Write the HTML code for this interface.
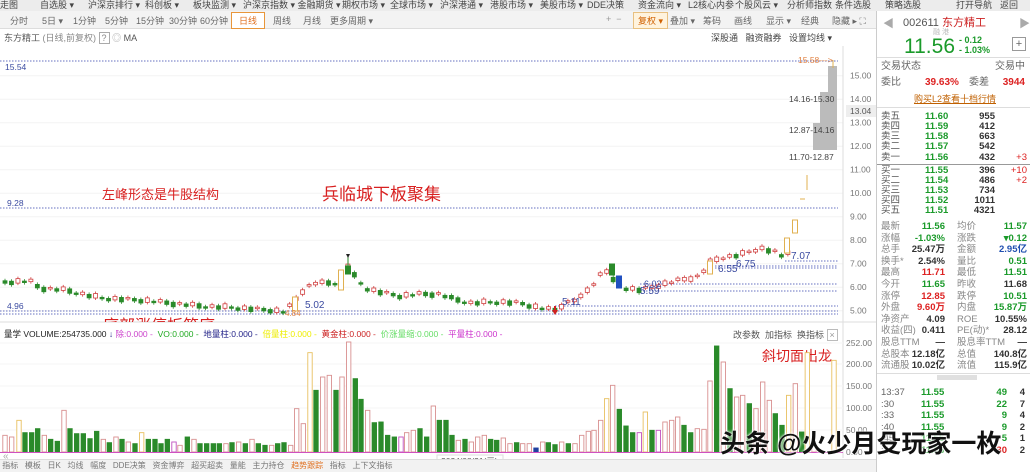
<!DOCTYPE html>
<html><head><meta charset="utf-8">
<style>
*{margin:0;padding:0;box-sizing:border-box}
body{width:1030px;height:472px;overflow:hidden;background:#fff;font-family:"Liberation Sans","Noto Sans CJK SC",sans-serif;position:relative;color:#333}
.a{position:absolute;white-space:nowrap}
#top{position:absolute;left:0;top:0;width:1030px;height:11px;background:#ececec;font-size:9px;color:#444;line-height:11px}
#tabs{position:absolute;left:0;top:11px;width:876px;height:18px;background:#f3f3f3;border-bottom:1px solid #ddd;font-size:9px;color:#666}
#tabs span{position:absolute;top:3px}
#rp{position:absolute;left:876px;top:11px;width:154px;height:461px;border-left:1px solid #ccc;background:#fff;font-size:10px}
.r{position:absolute;left:4px;width:148px;height:10px;line-height:10px;font-size:9.5px}
.r b{position:absolute;font-weight:bold}
.g{color:#1a9a2a}.rd{color:#d22}.gr{color:#888}.bl{color:#2050b0}
</style></head><body>
<div id="top">
<span class="a" style="left:0">走图</span><span class="a" style="left:40px">自选股 ▾</span><span class="a" style="left:88px">沪深京排行 ▾</span><span class="a" style="left:145px">科创板 ▾</span><span class="a" style="left:193px">板块监测 ▾</span><span class="a" style="left:243px">沪深京指数 ▾ 金融期货 ▾</span><span class="a" style="left:342px">期权市场 ▾</span><span class="a" style="left:390px">全球市场 ▾</span><span class="a" style="left:440px">沪深港通 ▾</span><span class="a" style="left:490px">港股市场 ▾</span><span class="a" style="left:540px">美股市场 ▾</span><span class="a" style="left:587px">DDE决策</span><span class="a" style="left:638px">资金流向 ▾</span><span class="a" style="left:688px">L2核心内参</span><span class="a" style="left:735px">个股风云 ▾</span><span class="a" style="left:787px">分析师指数</span><span class="a" style="left:835px">条件选股</span><span class="a" style="left:885px">策略选股</span><span class="a" style="left:956px">打开导航</span><span class="a" style="left:1000px">返回</span>
</div>
<div id="tabs">
<span style="left:10px">分时</span><span style="left:42px">5日 ▾</span><span style="left:73px">1分钟</span><span style="left:105px">5分钟</span><span style="left:136px">15分钟</span><span style="left:169px">30分钟</span><span style="left:200px">60分钟</span>
<span style="left:231px;top:1px;padding:1px 7px;border:1px solid #e8963a;background:#fff;color:#e07020">日线</span>
<span style="left:273px">周线</span><span style="left:303px">月线</span><span style="left:330px">更多周期 ▾</span>
<span style="left:606px;color:#999">+ &nbsp;−</span>
<span style="left:633px;top:1px;padding:1px 4px;border:1px solid #e8c080;background:#fff3dd;color:#d06000">复权 ▾</span>
<span style="left:670px">叠加 ▾</span><span style="left:703px">筹码</span><span style="left:734px">画线</span><span style="left:766px">显示 ▾</span><span style="left:801px">经典</span><span style="left:832px">隐藏 ▸ ⛶</span>
</div>
<div class="a" style="left:4px;top:31px;font-size:9px;color:#555">东方精工 <span style="color:#888">(日线,前复权)</span> <span style="border:1px solid #aaa;padding:0 2px;color:#888">?</span> <span style="color:#aaa">◎</span> MA</div>
<div class="a" style="left:711px;top:31px;font-size:9px;color:#444">深股通 &nbsp; 融资融券 &nbsp;&nbsp;设置均线 ▾</div>
<div class="a" style="left:4px;top:328px;font-size:8.5px;color:#222">量学 VOLUME:254735.000 <span style="color:#228">↓</span> <span style="color:#c4c">除:0.000 -</span> &nbsp;<span style="color:#2a2">VO:0.000 -</span> &nbsp;<span style="color:#228">地量柱:0.000 -</span> &nbsp;<span style="color:#ee0">倍量柱:0.000 -</span> &nbsp;<span style="color:#c22">黄金柱:0.000 -</span> &nbsp;<span style="color:#6d6">价涨量缩:0.000 -</span> &nbsp;<span style="color:#c3c">平量柱:0.000 -</span></div>
<div class="a" style="left:733px;top:328px;font-size:9px;color:#555">改参数 &nbsp;加指标 &nbsp;换指标 <span style="border:1px solid #bbb;padding:0 2px;color:#999">×</span></div>

<svg id="ch" class="a" style="left:0;top:0" width="876" height="472" xmlns="http://www.w3.org/2000/svg" font-family="Liberation Sans, Noto Sans CJK SC, sans-serif"></svg>

<div class="a" style="left:0;top:459px;width:876px;height:13px;background:#f2f2f2;border-top:1px solid #ddd;font-size:8px;color:#777;line-height:12px">&nbsp;指标 &nbsp; 模板 &nbsp; 日K &nbsp; 均线 &nbsp; 幅度 &nbsp; DDE决策 &nbsp; 资金博弈 &nbsp; 超买超卖 &nbsp; 量能 &nbsp; 主力持仓 &nbsp; <span style="color:#e07020">趋势跟踪</span> &nbsp; 指标 &nbsp; 上下文指标</div>

<div id="rp">
<div class="a" style="left:6px;top:4px;color:#aaa;font-size:11px">◀</div>
<div class="a" style="left:26px;top:3px;font-size:11px;color:#555">002611 <span style="color:#c22">东方精工</span></div>
<div class="a" style="left:142px;top:4px;color:#aaa;font-size:11px">▶</div>
<div class="a" style="left:56px;top:16px;font-size:7px;color:#bbb">融 港</div>
<div class="a" style="left:27px;top:24px;font-size:21px;color:#1a9a2a">11.56</div>
<div class="a" style="left:82px;top:24px;font-size:9px;color:#1a9a2a;line-height:10px;font-weight:bold">- 0.12<br>- 1.03%</div>
<div class="a" style="left:135px;top:26px;width:14px;height:14px;border:1px solid #999;font-size:11px;line-height:12px;text-align:center;color:#666">+</div>
<div class="a" style="left:0;top:46px;width:154px;border-top:1px solid #ddd"></div>
<div class="r" style="top:51px;color:#666;font-size:10px">交易状态<b style="right:4px;font-weight:normal">交易中</b></div>
<div class="r" style="top:67px;color:#666;font-size:10px">委比<b class="rd" style="left:44px">39.63%</b><span style="position:absolute;left:88px">委差</span><b class="rd" style="right:4px">3944</b></div>
<div class="r" style="top:83px;text-align:center;color:#c06000;text-decoration:underline;font-size:9px">购买L2查看十档行情</div>
<div class="a" style="left:0;top:96px;width:154px;border-top:1px solid #ddd"></div>
<div id="ob"></div>
<div class="a" style="left:0;top:362px;width:154px;border-top:1px solid #ddd"></div>
<div class="a" style="left:60px;top:364px;width:40px;height:5px;background:#e0e0e0"></div>
</div>

<div class="a" style="left:720px;top:424px;font-size:25px;color:#111;font-weight:bold;text-shadow:0 0 2px #fff,0 0 3px #fff;font-family:'Liberation Sans','Noto Sans CJK SC',sans-serif">头条 @火少月殳玩家一枚</div>

<script>
var s=document.getElementById('ch'),h='';
function py(p){return 310.7-(p-5)*23.5}
h+='<defs><clipPath id="cl"><rect x="0" y="0" width="876" height="322"/></clipPath></defs>';
for(var p=5;p<=15;p++){h+='<line x1="0" x2="843" y1="'+py(p)+'" y2="'+py(p)+'" stroke="#f3f3f3"/>';h+='<text x="850" y="'+(py(p)+3)+'" font-size="8.5" fill="#777">'+p.toFixed(2)+'</text>';}
h+='<rect x="846" y="105" width="30" height="12" fill="#eee"/><text x="850" y="114" font-size="8.5" fill="#555">13.04</text>';
h+='<line x1="843" x2="843" y1="46" y2="458" stroke="#ddd"/><line x1="0" x2="876" y1="322" y2="322" stroke="#ddd"/>';
var vt=[[252,343],[200,364],[150,386],[100,408],[50,430],[0,452]];
vt.forEach(function(v){h+='<text x="846" y="'+(v[1]+3)+'" font-size="8.5" fill="#777">'+v[0].toFixed(2)+'</text>';h+='<line x1="0" x2="843" y1="'+v[1]+'" y2="'+v[1]+'" stroke="#f5f5f5"/>';});
function dl(x1,x2,y,c){h+='<line x1="'+x1+'" x2="'+x2+'" y1="'+y+'" y2="'+y+'" stroke="'+(c||'#6670c0')+'" stroke-dasharray="1.5,1.5"/>';}
dl(0,838,61);dl(0,838,208);dl(0,838,311);dl(0,838,314);dl(555,838,306);dl(640,838,291);dl(640,838,284);dl(715,838,268);dl(715,838,266);dl(785,838,261);
function t(x,y,s,c,f){h+='<text x="'+x+'" y="'+y+'" font-size="'+(f||8.5)+'" fill="'+c+'">'+s+'</text>';}
t(5,70,'15.54','#3a4aa0');t(7,206,'9.28','#3a4aa0');t(7,309,'4.96','#3a4aa0');
t(798,63,'15.58---&gt;','#e08040');
h+='<rect x="813" y="123" width="24" height="27" fill="#bbb"/><rect x="820" y="92" width="17" height="31" fill="#bbb"/><rect x="828" y="66" width="9" height="26" fill="#bbb"/>';
t(789,102,'14.16-15.30','#444');t(789,133,'12.87-14.16','#444');t(789,160,'11.70-12.87','#444');
var cp=[[5,282],[30,281],[40,288],[65,290],[100,298],[140,300],[160,302],[200,306],[240,308],[270,310],[285,312],[295,300],[305,288],[315,283],[330,283],[340,283],[348,265],[355,277],[365,288],[380,292],[400,296],[420,294],[440,294],[450,298],[470,303],[500,302],[520,303],[540,308],[555,310],[565,303],[580,298],[595,282],[605,268],[612,280],[625,288],[640,290],[660,285],[680,280],[700,276],[710,262],[720,258],[740,255],[760,248],[775,252],[785,258],[793,240]];
function iy(x){for(var i=1;i<cp.length;i++){if(x<=cp[i][0]){var a=cp[i-1],b=cp[i];return a[1]+(b[1]-a[1])*(x-a[0])/(b[0]-a[0]);}}return 240}
var prev=282,k=0;
for(var x=5;x<790;x+=6.47){k++;var y=iy(x)+((k*37)%5-2)*0.6;var up=y<prev;var bh=1.5+(k*13)%4;var c=up?'#d04040':'#2a8a2a';
h+='<line x1="'+x+'" x2="'+x+'" y1="'+(y-bh/2-2)+'" y2="'+(y+bh/2+2)+'" stroke="'+c+'" stroke-width="0.8"/>';
h+='<rect x="'+(x-2)+'" y="'+(y-bh/2)+'" width="4" height="'+bh+'" fill="'+(up?'#fff':c)+'" stroke="'+c+'" stroke-width="0.8"/>';prev=y;}
function cd(x,y1,y2,c,f){h+='<rect x="'+(x-2.5)+'" y="'+y1+'" width="5" height="'+(y2-y1)+'" fill="'+(f||'#fff')+'" stroke="'+c+'"/>';}
cd(295,297,311,'#e0b050');cd(341,270,290,'#e0b050');cd(348,266,274,'#2a8a2a','#2a8a2a');h+='<line x1="348" x2="348" y1="257" y2="270" stroke="#2a8a2a"/>';
cd(612,264,275,'#2a8a2a','#2a8a2a');cd(619,276,288,'#2050c0','#2050c0');cd(710,261,274,'#e0b050');cd(787,238,253,'#e0b050');cd(795,220,233,'#e0b050');
h+='<line x1="807" x2="807" y1="175" y2="190" stroke="#e0b050"/><line x1="800" x2="805" y1="199" y2="199" stroke="#e0b050"/><line x1="833" x2="833" y1="60" y2="68" stroke="#e0b050"/>';
h+='<path d="M555 315 l-3 -5 h2 v-4 h2 v4 h2z" fill="#d02020"/><path d="M348 258 l-2 -4 h4z" fill="#222"/>';
t(305,308,'5.02','#3a4aa0',10);t(285,316,'4.84','#e08040',8);t(562,305,'5.11','#3a4aa0',10);t(640,294,'5.59','#3a4aa0',10);t(644,287,'6.02','#3a4aa0',9);t(718,272,'6.55','#3a4aa0',10);t(736,267,'6.75','#3a4aa0',10);t(791,259,'7.07','#3a4aa0',10);
h+='<text x="102" y="199" font-size="13" fill="#d82020">左峰形态是牛股结构</text>';
h+='<text x="322" y="200" font-size="17" fill="#d82020">兵临城下板聚集</text>';
h+='<text x="103" y="331" font-size="16" fill="#d82020" clip-path="url(#cl)">底部涨停板筑底</text>';
h+='<text x="762" y="361" font-size="14" fill="#d82020">斜切面出龙</text>';
var A=[[15,50,'r'],[35,45,'r'],[57,95,'y'],[75,58,'g'],[95,58,'g'],[113,70,'g'],[133,50,'r'],[152,38,'g'],[172,32,'g'],[192,125,'r'],[210,70,'g'],[230,55,'g'],[250,55,'g'],[270,40,'g'],[290,62,'g'],[310,38,'r'],[328,28,'g'],[348,45,'r'],[366,38,'g'],[385,30,'r'],[405,25,'g'],[425,58,'y'],[445,38,'g'],[465,38,'g'],[483,25,'g'],[502,38,'g'],[522,30,'p'],[540,20,'r'],[562,45,'g'],[582,38,'r'],[600,25,'g'],[620,25,'g'],[640,25,'g'],[658,25,'g'],[678,25,'r'],[696,28,'g'],[716,30,'r'],[736,25,'g'],[756,38,'r'],[775,25,'g'],[795,20,'g'],[815,20,'r'],[833,25,'g'],[852,28,'g'],[872,20,'r'],[890,130,'r'],[910,85,'r'],[930,298,'y'],[948,185,'g'],[968,225,'r'],[988,230,'r'],[1008,185,'g'],[1026,225,'r'],[1046,330,'r'],[1066,220,'g'],[1083,158,'g'],[1103,125,'r'],[1123,88,'g'],[1143,90,'g'],[1163,50,'g'],[1183,45,'g'],[1203,45,'p'],[1220,58,'r'],[1240,65,'r'],[1260,70,'g'],[1280,45,'g'],[1300,138,'r'],[1318,95,'g'],[1338,95,'g'],[1356,50,'g'],[1375,35,'r'],[1395,38,'g'],[1414,30,'r'],[1433,45,'r'],[1453,50,'r'],[1472,38,'g'],[1490,35,'g'],[1510,42,'r'],[1530,25,'r'],[1550,28,'g']];
var B=[[8,25,'r'],[28,25,'r'],[48,12,'b'],[68,30,'r'],[85,28,'g'],[105,22,'g'],[125,30,'r'],[145,25,'g'],[165,25,'r'],[185,50,'r'],[205,62,'r'],[222,65,'r'],[242,95,'r'],[260,160,'y'],[278,200,'r'],[298,128,'g'],[318,78,'g'],[338,58,'g'],[358,58,'p'],[376,120,'y'],[396,65,'g'],[415,65,'p'],[435,90,'r'],[455,95,'r'],[473,105,'r'],[492,80,'g'],[512,58,'g'],[532,70,'r'],[552,68,'r'],[570,213,'r'],[590,318,'g'],[610,270,'r'],[630,190,'g'],[650,165,'r'],[668,170,'r'],[688,145,'g'],[708,130,'r'],[728,210,'r'],[748,155,'r'],[766,115,'g'],[786,80,'g'],[806,170,'y'],[826,205,'r'],[845,60,'g'],[862,298,'y'],[882,20,'r'],[942,275,'y']];
var col={r:['#fff','#d89090'],g:['#2a8a2a','#2a8a2a'],y:['#fff','#e8c060'],p:['#fff','#c050c0'],b:['#2040a0','#2040a0']};
function vb(x,hh,ty){var c=col[ty];h+='<rect x="'+(x-2.2)+'" y="'+(452-hh)+'" width="4.4" height="'+hh+'" fill="'+c[0]+'" stroke="'+c[1]+'" stroke-width="0.9"/>';}
A.forEach(function(v){vb(v[0]/3,v[1]/3,v[2])});B.forEach(function(v){vb(520+v[0]/3,v[1]/3,v[2])});
h+='<line x1="0" x2="843" y1="452.5" y2="452.5" stroke="#d050c0"/>';
t(78,465,'06','#666');t(202,465,'07','#666');t(350,465,'08','#666');
h+='<rect x="437" y="455" width="66" height="11" fill="#fff" stroke="#ddd"/>';t(441,464,'2024/08/21(三)','#555');
t(616,465,'10','#666');t(733,465,'11','#666');t(3,459,'«','#aaa',10);
s.innerHTML=h;
var ob=[['卖五','11.60','955',''],['卖四','11.59','412',''],['卖三','11.58','663',''],['卖二','11.57','542',''],['卖一','11.56','432','+3'],['买一','11.55','396','+10'],['买二','11.54','486','+2'],['买三','11.53','734',''],['买四','11.52','1011',''],['买五','11.51','4321','']];
var o='',ys=[101,111,121,131,142,155,165,175,185,195];
ob.forEach(function(r,i){o+='<div class="r" style="top:'+ys[i]+'px;color:#555">'+r[0]+'<b class="g" style="left:44px">'+r[1]+'</b><b style="right:34px;color:#333">'+r[2]+'</b><span class="rd" style="position:absolute;right:2px">'+r[3]+'</span></div>';});
o+='<div class="a" style="left:0;top:153px;width:154px;border-top:1px solid #999"></div>';
var st=[['最新','11.56','g','均价','11.57','g'],['涨幅','-1.03%','g','涨跌','▾0.12','g'],['总手','25.47万','k','金额','2.95亿','bl'],['换手*','2.54%','k','量比','0.51','g'],['最高','11.71','rd','最低','11.51','g'],['今开','11.65','g','昨收','11.68','k'],['涨停','12.85','rd','跌停','10.51','g'],['外盘','9.60万','rd','内盘','15.87万','g'],['净资产','4.09','k','ROE','10.55%','k'],['收益(四)','0.411','k','PE(动)*','28.12','k'],['股息TTM','—','k','股息率TTM','—','k'],['总股本','12.18亿','k','总值','140.8亿','k'],['流通股','10.02亿','k','流值','115.9亿','k']];
st.forEach(function(r,i){var y=211+i*11.6;o+='<div class="r" style="top:'+y+'px;color:#888">'+r[0]+'<b class="'+r[2]+'" style="right:84px;'+(r[2]=='k'?'color:#333':'')+'">'+r[1]+'</b><span style="position:absolute;left:76px">'+r[3]+'</span><b class="'+r[5]+'" style="right:2px;'+(r[5]=='k'?'color:#333':'')+'">'+r[4]+'</b></div>';});
var tk=[['13:37','11.55','49','4'],[':30','11.55','22','7'],[':33','11.55','9','4'],[':40','11.55','9','2'],[':45','11.55','5','1'],[':48','11.56↑','30','2']];
tk.forEach(function(r,i){var y=377+i*11.5;o+='<div class="r" style="top:'+y+'px;color:#666">'+r[0]+'<b class="g" style="left:40px">'+r[1]+'</b><b class="'+(i==5?'rd':'g')+'" style="right:22px">'+r[2]+'</b><b style="right:4px;color:#333">'+r[3]+'</b></div>';});
document.getElementById('ob').innerHTML=o;
</script>
</body></html>
